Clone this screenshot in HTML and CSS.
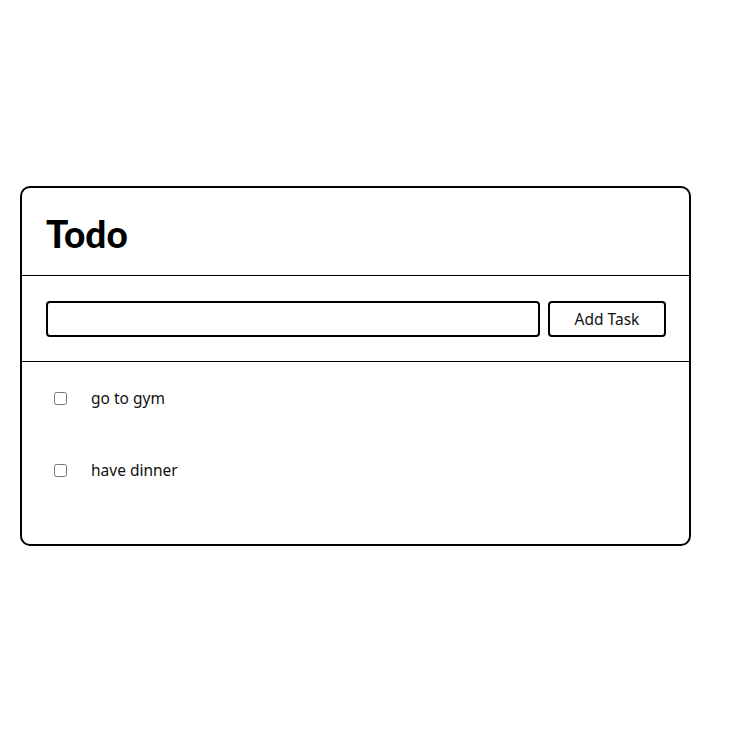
FILE: index.html
```html
<!DOCTYPE html>
<html lang="en">
<head>
    <meta charset="UTF-8">
    <meta name="viewport" content="width=device-width, initial-scale=1.0">
    <title>Todo</title>
    <link rel="stylesheet" href="styles.css">
</head>
<body>
    <div class="card">
        <div class="card-header">
            <h1>Todo</h1>
        </div>
        <form class="task-form" onsubmit="return false;">
            <input type="text" class="task-input">
            <button type="submit" class="add-btn">Add Task</button>
        </form>
        <ul class="task-list">
            <li class="task"><input type="checkbox"><span>go to gym</span></li>
            <li class="task"><input type="checkbox"><span>have dinner</span></li>
        </ul>
    </div>
</body>
</html>
```

FILE: styles.css
```css
body {
    margin: 0;
    padding: 186px 0 0 20px;
    font-family: "Noto Sans", "Open Sans", sans-serif;
    background: #fff;
    color: #111;
}
.card {
    box-sizing: border-box;
    width: 671px;
    border: 2px solid #000;
    border-radius: 10px;
}
.card-header {
    height: 88px;
    padding: 4px 24px 0;
    box-sizing: border-box;
    display: flex;
    align-items: center;
    border-bottom: 1px solid #000;
}
h1 {
    margin: 0;
    font-family: Lato, sans-serif;
    font-weight: 900;
    font-size: 37px;
    color: #000;
}
.task-form {
    display: flex;
    gap: 8px;
    padding: 25px 23px 24px 24px;
    border-bottom: 1px solid #000;
    margin: 0;
}
.task-input {
    flex: 1;
    box-sizing: border-box;
    height: 36px;
    border: 2px solid #000;
    border-radius: 4px;
    font-size: 15px;
}
.add-btn {
    box-sizing: border-box;
    width: 118px;
    height: 36px;
    background: #fff;
    border: 2px solid #000;
    border-radius: 4px;
    font-family: "Noto Sans", sans-serif;
    font-size: 15.5px;
    color: #111;
    cursor: pointer;
}
.task-list {
    list-style: none;
    margin: 0;
    padding: 0 0 38px 0;
}
.task {
    height: 72px;
    display: flex;
    align-items: center;
    padding-left: 28px;
    font-size: 15.5px;
}
.task input {
    width: 13px;
    height: 13px;
    margin: 0 24px 0 4px;
}
```
